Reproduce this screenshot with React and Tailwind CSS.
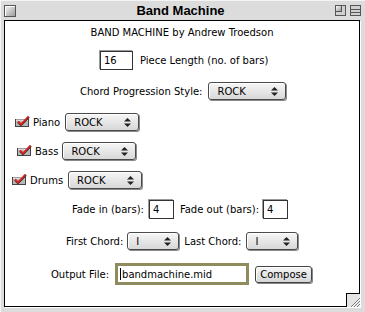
import React from 'react';

function CheckIcon() {
  return (
    <svg width="16" height="12" viewBox="0 0 16 12" className="shrink-0">
      <rect x="0.5" y="3.5" width="13" height="7" fill="#b8b8b8" stroke="#444" />
      <line x1="1" y1="4" x2="13" y2="4" stroke="#fff" />
      <path d="M3 6 L6 9 L14 1" fill="none" stroke="#333" strokeWidth="2.2" />
      <path d="M3 5.5 L6 8.5 L13.5 0.5" fill="none" stroke="#e0201a" strokeWidth="1.8" />
    </svg>
  );
}

function Arrows() {
  return (
    <svg width="7" height="9" viewBox="0 0 7 9" className="shrink-0">
      <path d="M3.5 0 L7 3.5 L0 3.5 Z" fill="#222" />
      <path d="M0 5.5 L7 5.5 L3.5 9 Z" fill="#222" />
    </svg>
  );
}

function Popup({ value, width }) {
  return (
    <div
      className={`${width} h-[18px] shrink-0 flex items-center justify-between pl-[8px] pr-[7px] rounded-[3px] border border-[#4a4a4a] bg-gradient-to-b from-[#f6f6f6] to-[#d8d8d8] shadow-[1px_1px_0_#8a8a8a,inset_1px_1px_0_#fff]`}
    >
      <span className="text-black">{value}</span>
      <Arrows />
    </div>
  );
}

function Field({ value, width }) {
  return (
    <div
      className={`${width} h-[19px] shrink-0 flex items-center pl-[3px] bg-white border border-[#333] shadow-[1px_1px_0_#fff,-1px_-1px_0_#9a9a9a]`}
    >
      {value}
    </div>
  );
}

export default function App() {
  return (
    <div className="w-[365px] h-[312px] bg-[#dcdcdc] flex flex-col font-['DejaVu_Sans',sans-serif] text-[10px] text-black antialiased overflow-hidden border-l border-t border-[#f4f4f4]">
      <div className="h-[19px] shrink-0 flex items-center relative">
        <div className="ml-[3px] w-[12px] h-[12px] border border-[#555] bg-gradient-to-br from-[#fafafa] to-[#9c9c9c] shadow-[inset_1px_1px_0_#fff]" />
        <div className="flex-1 text-center font-['Liberation_Sans',sans-serif] font-bold text-[13px] pl-[10px]">
          Band Machine
        </div>
        <div className="w-[11px] h-[11px] border border-[#555] bg-[#d0d0d0] relative mr-[4px]">
          <div className="absolute left-0 top-0 w-[6px] h-[6px] border-r border-b border-[#555] bg-gradient-to-br from-[#fff] to-[#999]" />
        </div>
        <div className="w-[11px] h-[11px] border border-[#555] bg-[#d0d0d0] flex flex-col justify-center gap-[2px] mr-[4px]">
          <div className="h-px bg-[#555]" />
          <div className="h-px bg-[#555]" />
        </div>
      </div>

      <div className="ml-[3px] w-[356px] h-[287px] bg-white border border-black relative flex flex-col shadow-[1px_1px_0_#fff]">
        <div className="mt-[1px] h-[20px] flex items-center justify-center">
          BAND MACHINE by Andrew Troedson
        </div>

        <div className="mt-[8px] h-[20px] flex items-center pl-[95px] gap-[7px]">
          <Field value="16" width="w-[33px]" />
          <span>Piece Length (no. of bars)</span>
        </div>

        <div className="mt-[11px] h-[20px] flex items-center pl-[75px] gap-[6px]">
          <span>Chord Progression Style:</span>
          <Popup value="ROCK" width="w-[78px]" />
        </div>

        <div className="mt-[11px] h-[20px] flex items-center pl-[10px]">
          <CheckIcon />
          <span className="ml-[2px] mr-[5px]">Piano</span>
          <Popup value="ROCK" width="w-[74px]" />
        </div>

        <div className="mt-[9px] h-[20px] flex items-center pl-[12px]">
          <CheckIcon />
          <span className="ml-[2px] mr-[4px]">Bass</span>
          <Popup value="ROCK" width="w-[74px]" />
        </div>

        <div className="mt-[9px] h-[20px] flex items-center pl-[7px]">
          <CheckIcon />
          <span className="ml-[2px] mr-[5px]">Drums</span>
          <Popup value="ROCK" width="w-[74px]" />
        </div>

        <div className="mt-[9px] h-[20px] flex items-center pl-[67px]">
          <span className="mr-[5px]">Fade in (bars):</span>
          <Field value="4" width="w-[25px]" />
          <span className="ml-[6px] mr-[4px]">Fade out (bars):</span>
          <Field value="4" width="w-[25px]" />
        </div>

        <div className="mt-[12px] h-[20px] flex items-center pl-[61px]">
          <span className="mr-[4px]">First Chord:</span>
          <Popup value="I" width="w-[52px]" />
          <span className="ml-[5px] mr-[5px]">Last Chord:</span>
          <Popup value="I" width="w-[52px]" />
        </div>

        <div className="mt-[12px] h-[22px] flex items-center pl-[46px]">
          <span className="mr-[6px]">Output File:</span>
          <div className="w-[134px] h-[22px] shrink-0 border-[3px] border-[#8e8b5c] bg-white flex items-center pl-[2px]">
            <div className="w-px h-[12px] bg-black mr-px" />
            <span>bandmachine.mid</span>
          </div>
          <div className="ml-[6px] w-[57px] h-[17px] shrink-0 flex items-center justify-center rounded-[3px] border border-[#444] bg-gradient-to-b from-[#f6f6f6] to-[#d6d6d6] shadow-[1px_1px_0_#888,inset_1px_1px_0_#fff]">
            Compose
          </div>
        </div>

        <div className="absolute right-[-1px] bottom-[-1px] w-[14px] h-[14px] border-l border-t border-black bg-[#e4e4e4] overflow-hidden">
          <svg width="14" height="14" viewBox="0 0 14 14">
            <path d="M13 4 L4 13 M13 7 L7 13 M13 10 L10 13" stroke="#777" strokeWidth="1" />
            <path d="M13 5 L5 13 M13 8 L8 13 M13 11 L11 13" stroke="#fff" strokeWidth="1" />
          </svg>
        </div>
      </div>
    </div>
  );
}
